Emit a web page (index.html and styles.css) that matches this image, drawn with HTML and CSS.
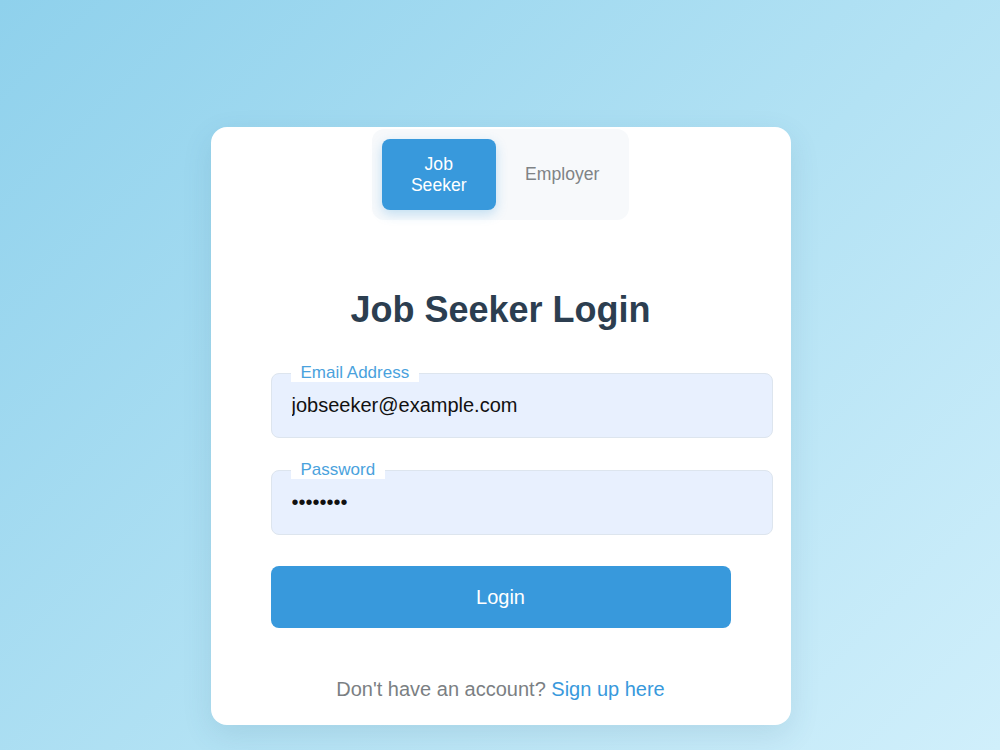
FILE: index.html
```html
<!DOCTYPE html>
<html lang="en">
<head>
<meta charset="utf-8">
<title>Job Seeker Login</title>
<link rel="stylesheet" href="styles.css">
</head>
<body>
<main class="page">
  <section class="card">
    <div class="tabs">
      <button class="tab tab-active" type="button">Job Seeker</button>
      <button class="tab" type="button">Employer</button>
    </div>
    <h2 class="title">Job Seeker Login</h2>
    <form class="form">
      <div class="field">
        <label class="field-label" for="email">Email Address</label>
        <input class="field-input" id="email" type="email" value="jobseeker@example.com">
      </div>
      <div class="field">
        <label class="field-label" for="password">Password</label>
        <input class="field-input" id="password" type="password" value="password">
      </div>
      <button class="submit" type="button">Login</button>
    </form>
    <p class="footer">Don't have an account? <a class="footer-link" href="#">Sign up here</a></p>
  </section>
</main>
</body>
</html>
```

FILE: styles.css
```css
* {
  margin: 0;
}

html, body {
  height: 100%;
}

body {
  font-family: "Liberation Sans", Arial, sans-serif;
  background: linear-gradient(135deg, #8fd1ec 0%, #b3e2f4 55%, #d0effb 100%);
  overflow: hidden;
}

.page {
  display: flex;
  justify-content: center;
  padding-top: 127px;
  padding-left: 1px;
}

.card {
  width: 460px;
  padding: 2px 60px 24px;
  background: #ffffff;
  border-radius: 16px;
  box-shadow: 0 10px 30px rgba(40, 90, 120, 0.12);
  display: flex;
  flex-direction: column;
}

.tabs {
  align-self: center;
  width: 237px;
  display: flex;
  gap: 10px;
  padding: 10px;
  background: #f7f9fb;
  border-radius: 12px;
}

.tab {
  box-sizing: border-box;
  flex: none;
  width: 113.5px;
  height: 71px;
  padding: 0 8px;
  border: none;
  border-radius: 8px;
  background: transparent;
  color: #7f8386;
  font-family: inherit;
  font-size: 17.6px;
  line-height: 21px;
  text-align: center;
  cursor: pointer;
}

.tab-active {
  padding: 0 28px;
  background: #3899dc;
  color: #ffffff;
  box-shadow: 0 4px 12px rgba(52, 152, 219, 0.28);
}

.title {
  margin-top: 70px;
  text-align: center;
  font-size: 36px;
  line-height: 40px;
  font-weight: bold;
  color: #2c3e50;
}

.form {
  margin-top: 43px;
  display: flex;
  flex-direction: column;
}

.field {
  position: relative;
  margin-bottom: 32px;
}

.field + .field {
  margin-bottom: 31px;
}

.field-label {
  position: absolute;
  top: -10px;
  left: 20px;
  padding: 0 10px;
  background: #ffffff;
  color: #4aa2dd;
  font-size: 17px;
  line-height: 19px;
}

.field-input {
  display: block;
  width: 460px;
  padding: 20px;
  border: 1px solid #dde5ee;
  border-radius: 8px;
  background: #e8f0fe;
  color: #111111;
  font-family: inherit;
  font-size: 20px;
  line-height: 23px;
  outline: none;
}

.submit {
  height: 62px;
  width: 460px;
  border: none;
  border-radius: 8px;
  background: #3899dc;
  color: #ffffff;
  font-family: inherit;
  font-size: 20px;
  cursor: pointer;
}

.footer {
  margin-top: 50px;
  text-align: center;
  font-size: 20px;
  line-height: 23px;
  color: #7b7f83;
}

.footer-link {
  color: #3899dc;
  text-decoration: none;
}
```
